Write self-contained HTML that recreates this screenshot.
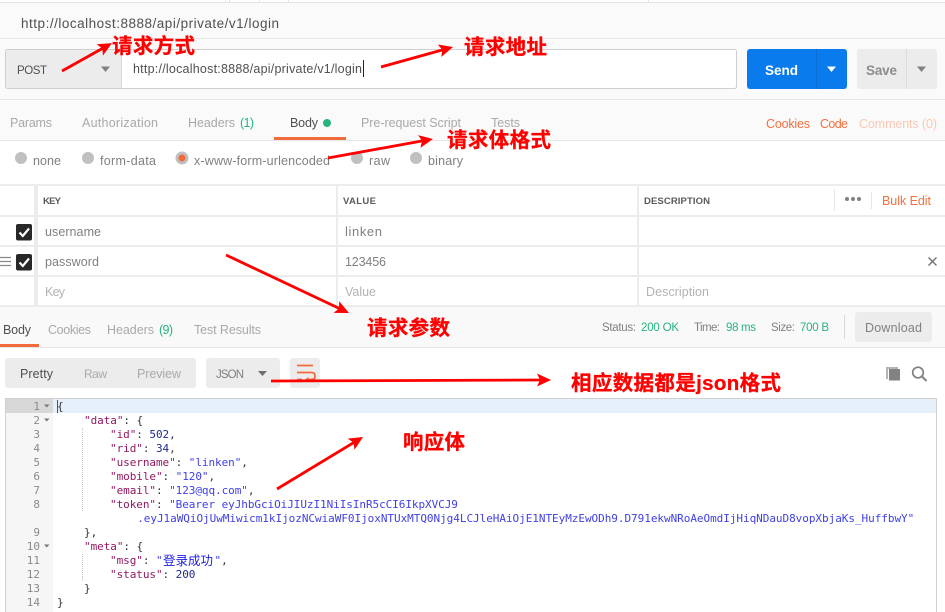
<!DOCTYPE html>
<html><head><meta charset="utf-8"><style>
html,body{margin:0;padding:0;background:#fff;width:945px;height:612px;overflow:hidden}
svg{display:block}
text{font-family:"Liberation Sans","Noto Sans CJK SC",sans-serif;font-size:12.5px;fill:#808080;white-space:pre}
.d{fill:#505050}.l{fill:#a9a9a9}.o{fill:#f2703f}.g{fill:#26b47f}.p{fill:#b3b3b3}
.h{font-size:9.5px;font-weight:bold;fill:#5a5a5a}
.s{font-size:11.5px;fill:#808080}.sg{font-size:11.5px;fill:#26b47f}
.a{font-family:"Liberation Sans","Noto Sans CJK SC",sans-serif;font-size:20.5px;font-weight:bold;fill:#f00;stroke:#f00;stroke-width:.3px}
.c{font-family:"DejaVu Sans Mono","Liberation Mono",monospace;font-size:11px;letter-spacing:-.06px;fill:#333}
.n{font-family:"DejaVu Sans Mono","Liberation Mono",monospace;font-size:11px;fill:#8a8a8a;text-anchor:end}
.k{fill:#92185f}.v{fill:#1f2a8f}.t{fill:#3f3fe6}
</style></head><body>
<svg width="945" height="612" viewBox="0 0 945 612" xmlns="http://www.w3.org/2000/svg">
<defs><marker id="m" markerUnits="userSpaceOnUse" markerWidth="18" markerHeight="16" refX="6" refY="7" orient="auto"><path d="M0 0.5L14 7L0 13.5L3 7Z" fill="#f00"/></marker></defs>

<!-- top chrome -->
<rect width="945" height="307" fill="#fafafa"/>
<rect width="945" height="2" fill="#fff"/>
<rect y="2" width="945" height="1" fill="#e4e4e4"/>
<path d="M225.500 0V2M229.500 0V2M259.500 0V2M288.500 0V2M648.500 0V2" stroke="#e4e4e4"/>
<text x="21" y="28" class="d" style="font-size:13.5px" textLength="258">http://localhost:8888/api/private/v1/login</text>
<rect y="38" width="945" height="1" fill="#e9e9e9"/>

<!-- URL bar -->
<rect x="5.500" y="49.500" width="731" height="39" rx="2" fill="#fff" stroke="#cfcfcf"/>
<path d="M7.500 50H122V88H7.500A2 2 0 0 1 6 86V52A2 2 0 0 1 7.500 50Z" fill="#ececec"/>
<rect x="121" y="50" width="1" height="38" fill="#d8d8d8"/>
<text x="17" y="74" class="d" style="font-size:11.5px" textLength="30">POST</text>
<path d="M101 66.500H110L105.500 72Z" fill="#808080"/>
<text x="133" y="73" class="d" style="font-size:12.500px" textLength="229">http://localhost:8888/api/private/v1/login</text>
<rect x="363" y="60" width="1" height="17" fill="#222"/>

<rect x="747" y="49" width="100" height="40" rx="3" fill="#097bed"/>
<rect x="816" y="49" width="1" height="40" fill="#0a6fd4"/>
<text x="765" y="75" style="font-size:13.500px;font-weight:bold;fill:#fff" textLength="33">Send</text>
<path d="M827 66.500H836L831.500 72Z" fill="#fff"/>
<rect x="857" y="49" width="80" height="40" rx="3" fill="#ececec"/>
<rect x="906" y="49" width="1" height="40" fill="#dcdcdc"/>
<text x="866" y="75" style="font-size:13.500px;font-weight:bold;fill:#8c8c8c" textLength="31">Save</text>
<path d="M917 66.500H926L921.500 72Z" fill="#808080"/>
<rect y="99" width="945" height="1" fill="#e6e6e6"/>

<!-- request tabs -->
<text x="10" y="127" class="l" textLength="42">Params</text>
<text x="82" y="127" class="l" textLength="76">Authorization</text>
<text x="188" y="127" class="l" textLength="47">Headers</text>
<text x="240" y="127" class="g" textLength="14">(1)</text>
<text x="290" y="127" class="d" textLength="28">Body</text>
<circle cx="327" cy="123" r="4" fill="#26b47f"/>
<rect x="274" y="137" width="72" height="3" fill="#f26b3a"/>
<text x="361" y="127" class="l" textLength="100">Pre-request Script</text>
<text x="491" y="127" class="l" textLength="29">Tests</text>
<text x="766" y="128" class="o" textLength="44">Cookies</text>
<text x="820" y="128" class="o" textLength="28">Code</text>
<text x="859" y="128" style="fill:#fbc7b2" textLength="78">Comments (0)</text>
<rect y="140" width="945" height="1" fill="#e6e6e6"/>
<rect y="141" width="945" height="166" fill="#fff"/>

<!-- radios -->
<g fill="#c0c0c0">
<circle cx="21" cy="158" r="6"/><circle cx="88" cy="158" r="6"/><circle cx="182" cy="158" r="6.500"/><circle cx="357" cy="158" r="6"/><circle cx="416" cy="158" r="6"/></g>
<circle cx="182" cy="158" r="3.500" fill="#f26b3a"/>
<text x="33" y="165" textLength="28">none</text>
<text x="100" y="165" textLength="56">form-data</text>
<text x="194" y="165" textLength="136">x-www-form-urlencoded</text>
<text x="369" y="165" textLength="21">raw</text>
<text x="428" y="165" textLength="35">binary</text>

<!-- params table -->
<g fill="#ececec">
<rect y="184" width="945" height="2"/>
<rect y="215" width="945" height="2"/>
<rect y="245" width="945" height="2"/>
<rect y="275" width="945" height="2"/>
<rect y="305" width="945" height="2"/>
<rect x="34" y="185" width="4" height="121"/>
<rect x="336" y="185" width="2" height="121"/>
<rect x="637" y="185" width="2" height="121"/>
</g>
<text x="43" y="204" class="h" textLength="18">KEY</text>
<text x="343" y="204" class="h" textLength="33">VALUE</text>
<text x="644" y="204" class="h" textLength="66">DESCRIPTION</text>
<rect x="834" y="189" width="1" height="22" fill="#e6e6e6"/>
<rect x="871" y="192" width="1" height="17" fill="#e6e6e6"/>
<g fill="#808080"><circle cx="847" cy="199" r="2"/><circle cx="853" cy="199" r="2"/><circle cx="859" cy="199" r="2"/></g>
<text x="882" y="205" class="o" textLength="49">Bulk Edit</text>

<rect x="16" y="224" width="16" height="16.500" rx="2" fill="#282828"/>
<path d="M19.500 232.500L22.800 236L29 228.500" fill="none" stroke="#fff" stroke-width="2.200"/>
<rect x="16" y="254" width="16" height="16.500" rx="2" fill="#282828"/>
<path d="M19.500 262.500L22.800 266L29 258.500" fill="none" stroke="#fff" stroke-width="2.200"/>
<path d="M0 257.500H11M0 261.500H11M0 265.500H11" stroke="#8a8a8a" stroke-width="1.300"/>

<text x="45" y="236" textLength="56">username</text>
<text x="345" y="236" style="font-size:13px" textLength="37">linken</text>
<text x="45" y="266" textLength="54">password</text>
<text x="345" y="266" textLength="41">123456</text>
<path d="M928.500 257.500L936.500 265.500M936.500 257.500L928.500 265.500" stroke="#707070" stroke-width="1.400"/>
<text x="45" y="296" class="p" textLength="20">Key</text>
<text x="345" y="296" class="p" textLength="31">Value</text>
<text x="646" y="296" class="p" textLength="63">Description</text>

<!-- response header -->
<rect y="307" width="945" height="40" fill="#f9f9f9"/>
<rect y="347" width="945" height="1" fill="#e6e6e6"/>
<text x="3" y="334" class="d" textLength="28">Body</text>
<rect y="344" width="39" height="3" fill="#f26b3a"/>
<text x="48" y="334" class="l" textLength="43">Cookies</text>
<text x="107" y="334" class="l" textLength="47">Headers</text>
<text x="159" y="334" class="g" textLength="14">(9)</text>
<text x="194" y="334" class="l" textLength="67">Test Results</text>
<text x="602" y="331" class="s" textLength="34">Status:</text>
<text x="641" y="331" class="sg" textLength="38">200 OK</text>
<text x="694" y="331" class="s" textLength="26">Time:</text>
<text x="726" y="331" class="sg" textLength="30">98 ms</text>
<text x="771" y="331" class="s" textLength="24">Size:</text>
<text x="800" y="331" class="sg" textLength="29">700 B</text>
<rect x="844" y="315" width="1" height="24" fill="#d8d8d8"/>
<rect x="855" y="312" width="77" height="30" rx="3" fill="#ececec"/>
<text x="865" y="332" textLength="57">Download</text>

<!-- response toolbar -->
<rect x="5" y="358" width="191" height="30" rx="3" fill="#ececec"/>
<text x="20" y="378" class="d" textLength="33">Pretty</text>
<text x="84" y="378" class="l" style="font-size:12px" textLength="23">Raw</text>
<text x="137" y="378" class="l" textLength="44">Preview</text>
<rect x="206" y="358" width="74" height="30" rx="3" fill="#ececec"/>
<text x="216" y="378" style="font-size:11.5px" textLength="28">JSON</text>
<path d="M258 371H267L262.500 376Z" fill="#707070"/>
<rect x="290" y="358" width="30" height="30" rx="3" fill="#ececec"/>
<path d="M297 365.500H313M297 372.500H311.500Q315 372.500 315 376Q315 379.500 311.500 379.500H307M297 379.500H302" fill="none" stroke="#f26b3a" stroke-width="1.800"/>
<path d="M308.500 377L305 379.500L308.500 382Z" fill="#f26b3a"/>
<path d="M887 379V368H898" fill="none" stroke="#b5b5b5" stroke-width="2"/>
<rect x="889" y="369" width="11" height="11.500" fill="#828282"/>
<circle cx="918" cy="372.500" r="5.300" fill="none" stroke="#808080" stroke-width="1.700"/>
<path d="M922 376.500L926.500 381" stroke="#808080" stroke-width="2"/>

<!-- editor -->
<rect x="5" y="398" width="933" height="214" fill="#fff"/>
<rect x="5" y="398" width="1" height="214" fill="#d0d0d0"/>
<rect x="936" y="398" width="1" height="214" fill="#d0d0d0"/>
<rect x="5" y="398" width="932" height="1" fill="#d0d0d0"/>
<rect x="6" y="399" width="47" height="213" fill="#f6f6f6"/>
<rect x="6" y="399" width="47" height="14" fill="#d8d8d8"/>
<rect x="53" y="399" width="883" height="14" fill="#e5f0fb"/>
<rect x="57" y="400" width="1" height="13" fill="#555"/>
<path d="M82.500 428V511M82.500 554V581" stroke="#c4c4c4" stroke-dasharray="1 1"/>

<g class="nums">
<text class="n" x="40" y="410">1</text><text class="n" x="40" y="424">2</text><text class="n" x="40" y="438">3</text><text class="n" x="40" y="452">4</text><text class="n" x="40" y="466">5</text><text class="n" x="40" y="480">6</text><text class="n" x="40" y="494">7</text><text class="n" x="40" y="508">8</text><text class="n" x="40" y="536">9</text><text class="n" x="40" y="550">10</text><text class="n" x="40" y="564">11</text><text class="n" x="40" y="578">12</text><text class="n" x="40" y="592">13</text><text class="n" x="40" y="606">14</text>
</g>
<path d="M44 404.500H49.500L46.750 407.500ZM44 418.500H49.500L46.750 421.500ZM44 544.500H49.500L46.750 547.500Z" fill="#777"/>

<text class="c" x="57" y="410">{</text>
<text class="c" x="84" y="424"><tspan class="k">"data"</tspan>: {</text>
<text class="c" x="110" y="438"><tspan class="k">"id"</tspan>: <tspan class="v">502</tspan>,</text>
<text class="c" x="110" y="452"><tspan class="k">"rid"</tspan>: <tspan class="v">34</tspan>,</text>
<text class="c" x="110" y="466"><tspan class="k">"username"</tspan>: <tspan class="t">"linken"</tspan>,</text>
<text class="c" x="110" y="480"><tspan class="k">"mobile"</tspan>: <tspan class="t">"120"</tspan>,</text>
<text class="c" x="110" y="494"><tspan class="k">"email"</tspan>: <tspan class="t">"123@qq.com"</tspan>,</text>
<text class="c" x="110" y="508"><tspan class="k">"token"</tspan>: <tspan class="t">"Bearer eyJhbGciOiJIUzI1NiIsInR5cCI6IkpXVCJ9</tspan></text>
<text class="c t" x="137.200" y="522" textLength="777" style="fill:#3f3fe6">.eyJ1aWQiOjUwMiwicm1kIjozNCwiaWF0IjoxNTUxMTQ0Njg4LCJleHAiOjE1NTEyMzEwODh9.D791ekwNRoAeOmdIjHiqNDauD8vopXbjaKs_HuffbwY"</text>
<text class="c" x="84" y="536">},</text>
<text class="c" x="84" y="550"><tspan class="k">"meta"</tspan>: {</text>
<text class="c" x="110" y="564"><tspan class="k">"msg"</tspan>: <tspan class="t">"</tspan></text>
<text x="163" y="565" textLength="50" style="font-family:'WenQuanYi Zen Hei','Noto Sans CJK SC',sans-serif;font-size:12.500px;fill:#1c1ce8">登录成功</text>
<text class="c" x="214.500" y="564"><tspan class="t">"</tspan>,</text>
<text class="c" x="110" y="578"><tspan class="k">"status"</tspan>: <tspan class="v">200</tspan></text>
<text class="c" x="84" y="592">}</text>
<text class="c" x="57" y="606">}</text>

<!-- annotations -->
<g stroke="#f00" stroke-width="2.800" fill="none">
<path d="M62 71L105 47" marker-end="url(#m)"/>
<path d="M381 67L445.300 49.100" marker-end="url(#m)"/>
<path d="M328 158L425.100 140.400" marker-end="url(#m)"/>
<path d="M226 255L341.800 309.600" marker-end="url(#m)"/>
<path d="M271 381L543 380" marker-end="url(#m)"/>
<path d="M277 489L356.200 441.100" marker-end="url(#m)"/>
</g>
<text class="a" x="112" y="53" textLength="83">请求方式</text>
<text class="a" x="464" y="54" textLength="83">请求地址</text>
<text class="a" x="447" y="147" textLength="104">请求体格式</text>
<text class="a" x="367" y="335" textLength="83">请求参数</text>
<text class="a" x="571" y="390" textLength="210">相应数据都是json格式</text>
<text class="a" x="403" y="449" textLength="62">响应体</text>
</svg>
</body></html>
